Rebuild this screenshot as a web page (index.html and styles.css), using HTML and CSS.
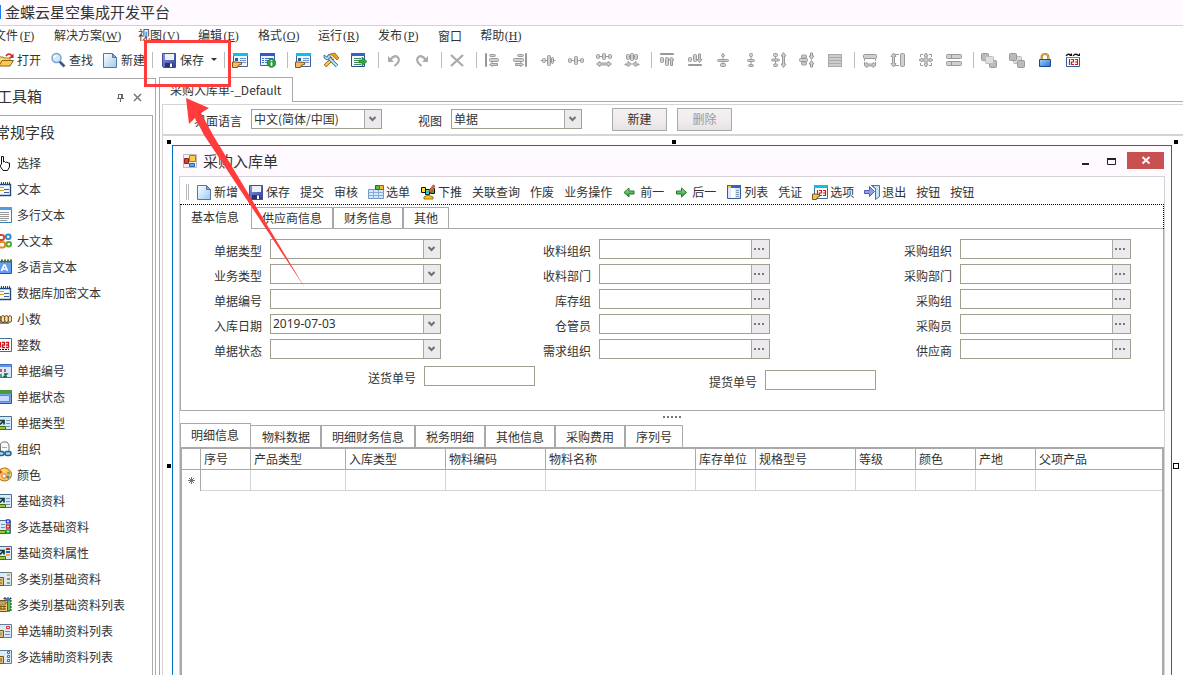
FILE: index.html
```html
<!DOCTYPE html>
<html lang="zh-CN">
<head>
<meta charset="utf-8">
<title>金蝶云星空集成开发平台</title>
<link rel="stylesheet" href="styles.css">
</head>
<body>
<svg class="defs" width="0" height="0" aria-hidden="true">
  <defs>
    <linearGradient id="g-blue" x1="0" y1="0" x2="1" y2="1"><stop offset="0" stop-color="#fff"/><stop offset="1" stop-color="#9cc9ee"/></linearGradient>
    <linearGradient id="g-save" x1="0" y1="0" x2="1" y2="1"><stop offset="0" stop-color="#8f97dc"/><stop offset="1" stop-color="#2c3f94"/></linearGradient>
    <linearGradient id="g-lock" x1="0" y1="0" x2="1" y2="1"><stop offset="0" stop-color="#9fd4ff"/><stop offset="1" stop-color="#2a6fd0"/></linearGradient>
    <linearGradient id="g-green" x1="0" y1="0" x2="0" y2="1"><stop offset="0" stop-color="#a5e8a0"/><stop offset="1" stop-color="#16912a"/></linearGradient>
  </defs>
  <symbol id="open" viewBox="0 0 16 16"><path d="M1 14V5h4l1 1h6v3" fill="#f7dc7a" stroke="#9b7325"/><path d="M1 14 4 8.500h11.500L12 14z" fill="#ffc94d" stroke="#8a6118"/><path d="M8 4q3-4 6 0" fill="none" stroke="#d42020" stroke-width="1.500"/><path d="M15.500 1.500V6H11z" fill="#d42020"/></symbol>
  <symbol id="find" viewBox="0 0 16 16"><path d="m9.500 9.500 5 5" stroke="#3a5a86" stroke-width="2.600"/><circle cx="6.500" cy="6" r="4.500" fill="#cdeafc" stroke="#7b9fc8" stroke-width="1.400"/><path d="M4 6q0-2.500 2.500-2.500" fill="none" stroke="#fff" stroke-width="1.500"/></symbol>
  <symbol id="new" viewBox="0 0 16 16"><path d="M1.500 1.500h9l4 4v10h-13z" fill="url(#g-blue)" stroke="#54779f"/><path d="M10.500 1.500v4h4z" fill="#7fa9d4" stroke="#54779f"/></symbol>
  <symbol id="save" viewBox="0 0 16 16"><path d="M1.500 1.500h13v14h-12l-1-1z" fill="url(#g-save)" stroke="#3e4a9a"/><path d="M4 2h9v6H4z" fill="#edf0fb"/><path d="M4 11h8v4H4z" fill="#26337c"/><path d="M9 11.500h2V15H9z" fill="#fff"/></symbol>
  <symbol id="formhand" viewBox="0 0 16 16"><path d="M1.500 1.500h14v13h-14z" fill="#edf4ff" stroke="#44618f"/><path d="M1 1h15v3H1z" fill="#08c4dc"/><path d="M8 6.500h6m-6 2h6m-6 2h6" stroke="#6f93d0"/><path d="M3 6h3v3H3z" fill="#265da8"/><path d="M.5 10h3l6 .5v2l-3 .5-1 2.500h-5z" fill="#f4bd60" stroke="#865514"/></symbol>
  <symbol id="forminfo" viewBox="0 0 16 16"><path d="M.5 1.500h14v12H.5z" fill="#edf2ff" stroke="#3d5eae"/><path d="M0 1h15v3H0z" fill="#3359c8"/><path d="M2 6.500h2m1 0h8m-11 2h2m1 0h5m-8 2h2m1 0h3" stroke="#4b71c4"/><circle cx="11.500" cy="11" r="4.300" fill="#25a33a" stroke="#116b1c" stroke-width=".6"/><path d="M11.500 8v1.200m0 1v3.500" stroke="#fff" stroke-width="1.700"/></symbol>
  <symbol id="tools" viewBox="0 0 16 16"><path d="m2 14 8-8" stroke="#90580b" stroke-width="3.500"/><path d="m2.500 13.500 8-8" stroke="#ffd152" stroke-width="2"/><path d="m7 2 5-1 4 5-2 2-4-4z" fill="#eaa21b" stroke="#8b5b12" stroke-width=".7"/><path d="m4 4 10 10" stroke="#34618c" stroke-width="3.400"/><path d="m4 4 10 10" stroke="#bde3f5" stroke-width="1.800"/><path d="M1 3v3l3 2 4-3-2-3-2 3z" fill="#acd8ef" stroke="#34618c" stroke-width=".8"/></symbol>
  <symbol id="formrun" viewBox="0 0 16 16"><path d="M.5 1.500h13v13H.5z" fill="#f6fbff" stroke="#29508d"/><path d="M0 1h14v3H0z" fill="#3561ce"/><path d="M3 6.500h7m-7 2h5m-5 2h6m-6 2h7" stroke="#46865e"/><path d="M8 8h3V5l5 4.500-5 4.500v-3H8z" fill="#29a73b" stroke="#237935" stroke-width=".6"/></symbol>
  <symbol id="undo" viewBox="0 0 16 16"><path d="M4 8q5-6 8-2.500T8.500 14" fill="none" stroke="#aaa" stroke-width="2.200"/><path d="M2 4v6h6z" fill="#aaa"/></symbol>
  <symbol id="redo" viewBox="0 0 16 16"><path d="M12 8Q7 2 4 5.500T7.500 14" fill="none" stroke="#aaa" stroke-width="2.200"/><path d="M14 4v6H8z" fill="#aaa"/></symbol>
  <symbol id="del" viewBox="0 0 16 16"><path d="m2 3 12 11M14 3 2 14" stroke="#aaa" stroke-width="2.300"/></symbol>
  <symbol id="a-left" viewBox="0 0 16 16"><g class="dim"><path d="M1.500 1.500v13h1v-13z"/><rect x="5.500" y="2.500" width="6" height="2" rx="1"/><rect x="5.500" y="6.500" width="9" height="3" rx="1"/><path d="m5.500 12.500 3-2v1h5v2h-5v1z"/></g></symbol>
  <symbol id="a-right" viewBox="0 0 16 16"><g class="dim"><path d="M13.500 1.500v13h1v-13z"/><rect x="5.500" y="2.500" width="6" height="2" rx="1"/><rect x="1.500" y="6.500" width="10" height="3" rx="1"/><path d="m11.500 12.500-3-2v1h-5v2h5v1z"/></g></symbol>
  <symbol id="a-h1" viewBox="0 0 16 16"><g class="dim"><path d="M.5 8.500h15"/><rect x="2.500" y="6.500" width="3" height="4" rx="1"/><rect x="7.500" y="3.500" width="3" height="10" rx="1"/><rect x="11.500" y="5.500" width="2" height="6" rx="1"/></g></symbol>
  <symbol id="a-h2" viewBox="0 0 16 16"><g class="dim"><path d="M0 8.500h16"/><rect x=".5" y="6.500" width="3" height="4" rx="1"/><rect x="6.500" y="4.500" width="3" height="8" rx="1"/><rect x="12.500" y="6.500" width="3" height="4" rx="1"/></g></symbol>
  <symbol id="a-h3" viewBox="0 0 16 16"><g class="dim"><path d="M1 4.500h14"/><rect x=".5" y="2.500" width="3" height="4" rx="1"/><rect x="6.500" y="1.500" width="3" height="6" rx="1"/><rect x="12.500" y="2.500" width="3" height="4" rx="1"/><path d="m.5 12 3.500-2.500V11h8V9.500l3.500 2.500-3.500 2.500V13H4v1.500z"/></g></symbol>
  <symbol id="a-h4" viewBox="0 0 16 16"><g class="dim"><rect x="2.500" y="2.500" width="3" height="5" rx="1"/><rect x="6.500" y="1.500" width="3" height="7" rx="1"/><rect x="10.500" y="2.500" width="3" height="5" rx="1"/><path d="M1 12h3V9.500L7.500 12 4 14.500V13H1zm14 0h-3V9.500L8.500 12l3.500 2.500V13h3z"/></g></symbol>
  <symbol id="a-top" viewBox="0 0 16 16"><g class="dim"><path d="M1.500 1.500h13v1h-13z"/><rect x="1.500" y="5.500" width="3" height="5" rx="1"/><rect x="6.500" y="5.500" width="3" height="8" rx="1"/><path d="M12.500 5 15 8h-1.500v5.500h-2V8H10z"/></g></symbol>
  <symbol id="a-bot" viewBox="0 0 16 16"><g class="dim"><path d="M1.500 12.500h13v1h-13z"/><rect x="1.500" y="5.500" width="3" height="4" rx="1"/><rect x="6.500" y="2.500" width="3" height="7" rx="1"/><path d="M12.500 10.500 15 7.500h-1.500V2h-2v5.500H10z"/></g></symbol>
  <symbol id="a-v1" viewBox="0 0 16 16"><g class="dim"><path d="M8 1v14"/><rect x="6.500" y="2.500" width="3" height="2" rx="1"/><rect x="2.500" y="7.500" width="11" height="2" rx="1"/><rect x="5.500" y="11.500" width="5" height="3" rx="1"/></g></symbol>
  <symbol id="a-v2" viewBox="0 0 16 16"><g class="dim"><path d="M8 1v14"/><rect x="6.500" y="1.500" width="3" height="3" rx="1"/><rect x="4.500" y="7.500" width="7" height="2" rx="1"/><rect x="5.500" y="12.500" width="5" height="2" rx="1"/></g></symbol>
  <symbol id="a-v3" viewBox="0 0 16 16"><g class="dim"><path d="M4.500 1v14"/><rect x="2.500" y="1.500" width="4" height="3" rx="1"/><rect x=".5" y="7" width="8" height="2" rx="1"/><rect x="2.500" y="12" width="4" height="2.500" rx="1"/><path d="M12.500.5 15 4h-1.500v8H15l-2.500 3.500L10 12h1.500V4H10z"/></g></symbol>
  <symbol id="a-v4" viewBox="0 0 16 16"><g class="dim"><rect x="2.500" y="3" width="5" height="3" rx="1"/><rect x=".5" y="6.500" width="8" height="3" rx="1"/><rect x="2.500" y="10" width="5" height="3" rx="1"/><path d="M11.500 1v3H10l2.500 3.500L15 4h-1.500V1zm0 14v-3H10l2.500-3.500L15 12h-1.500v3z"/></g></symbol>
  <symbol id="a-list" viewBox="0 0 16 16"><path d="M1 2h14v13H1z" fill="#aaa"/><path d="M2 3h12v2H2zm0 3h12v2H2zm0 3h12v2H2zm0 3h12v2H2z" fill="#ccc"/></symbol>
  <symbol id="s-w" viewBox="0 0 16 16"><g class="dim"><rect x="1.500" y="2.500" width="13" height="4" rx="1"/><path d="M2.500 7v5m11-5v5" stroke-dasharray="2 1"/><path d="m2 13 3-2.500V12h6v-1.500l3 2.500-3 2.500V14H5v1.500z"/></g></symbol>
  <symbol id="s-h" viewBox="0 0 16 16"><g class="dim"><rect x="10.500" y="1.500" width="4" height="13" rx="1"/><path d="M5 2.500h4m-4 11h4"/><path d="M3.500 1 6 4.500H4.500v7H6l-2.500 3.500L1 11.500h1.500v-7H1z"/></g></symbol>
  <symbol id="s-both" viewBox="0 0 16 16"><g class="dim"><path fill="none" d="M2.500 5V2.500H5m6 0h2.500V5m0 6v2.500H11m-6 0H2.500V11"/><path d="m8 1 2 3H9v3h3V6l3 2-3 2V9H9v3h1l-2 3-2-3h1V9H4v1L1 8l3-2v1h3V4H6z"/></g></symbol>
  <symbol id="s-rows" viewBox="0 0 16 16"><g class="dim"><rect x=".5" y="2.500" width="15" height="4" rx="1"/><path d="M5.500 2v5"/><rect x=".5" y="9.500" width="15" height="4" rx="1"/><path d="M5.500 9.500v4"/></g></symbol>
  <symbol id="z-front" viewBox="0 0 16 16"><g class="dim"><rect x=".5" y="1.500" width="7" height="7" rx="1" fill="#bbb"/><rect x="8.500" y="8.500" width="7" height="7" rx="1" fill="#bbb"/><rect x="4.500" y="4.500" width="8" height="7" rx="1" fill="#ddd" stroke="#bbb"/></g></symbol>
  <symbol id="z-back" viewBox="0 0 16 16"><g class="dim"><rect x="4.500" y="4.500" width="8" height="7" rx="1" fill="#ddd" stroke="#bbb"/><rect x=".5" y="1.500" width="7" height="7" rx="1" fill="#bbb"/><rect x="8.500" y="8.500" width="7" height="7" rx="1" fill="#bbb"/></g></symbol>
  <symbol id="lock" viewBox="0 0 16 16"><path d="M4.700 8V5a3.300 3 0 0 1 6.600 0v3" fill="none" stroke="#a77521" stroke-width="2.200"/><path d="M4.700 8V5a3.300 3 0 0 1 6.600 0v3" fill="none" stroke="#f3c864" stroke-width=".8"/><path d="M2.500 7.500h11v7h-11z" fill="url(#g-lock)" stroke="#194b8e"/></symbol>
  <symbol id="num" viewBox="0 0 16 16"><path d="M1 4q2-3 5-1m2 1q2-3 5-1" fill="none" stroke="#111" stroke-width="1.300"/><path d="M7 1v3H4zm8 0v3h-3z" fill="#111"/><path d="M1.500 5.500h13v9h-13z" fill="#fff" stroke="#355a96"/><path d="M1 5h14v1H1z" fill="#5c81c2"/><path d="M4.500 7v6M6 7.500h2.500V10H6.500v2.500H9M10 7.500h2.500v5H10m0-2.500h2" fill="none" stroke="#d01818" stroke-width="1.200"/></symbol>
  <symbol id="grid" viewBox="0 0 16 16"><path d="M.5 5.500h15v9H.5z" fill="#d3e7ff" stroke="#7398c8"/><path d="M.5 8.500h15m-15 3h15m-10-6v9m5-9v9" stroke="#88add9"/><path d="M7.500 1.500h4v4h-4z" fill="#57bd40" stroke="#236d20"/><path d="M11.500 1.500h4v4h-4z" fill="#ffb834" stroke="#956319"/></symbol>
  <symbol id="push" viewBox="0 0 16 16"><path d="M1.500 3.500h4v5h-4zm4 2h4v5h-4zm5-1h4v5h-4z" fill="#ffe529" stroke="#111"/><path d="M6 6.500h3v3H6z" fill="#17c8e5"/><path d="M11 6h3v3h-3z" fill="#29b83b"/><path d="m9 7 4-6 2 1-4 7z" fill="#db6844" stroke="#8a4421" stroke-width=".6"/><path d="m4 13 4-2 5 2v2H4z" fill="#ffc90b" stroke="#947218"/></symbol>
  <symbol id="prev" viewBox="0 0 16 16"><path d="m2 8.500 5-4.500v3h5v3H7v3z" fill="url(#g-green)" stroke="#24772a"/></symbol>
  <symbol id="next" viewBox="0 0 16 16"><path d="m12.500 8.500-5-4.500v3h-5v3h5v3z" fill="url(#g-green)" stroke="#24772a"/></symbol>
  <symbol id="list" viewBox="0 0 16 16"><path d="M1.500 1.500h13v13h-13z" fill="#d9e8fb" stroke="#345b98"/><path d="M1 1h14v3H1z" fill="#3268b2"/><path d="M2 2h3v2H2z" fill="#ffc23c"/><path d="M5 4h4v10H5z" fill="#fff"/><path d="M10 6.500h3m-3 2h3m-3 2h3m-3 2h3" stroke="#8298b5"/></symbol>
  <symbol id="opt" viewBox="0 0 16 16"><path d="M2.500 1.500h13v13h-13z" fill="#fff" stroke="#416898"/><path d="M2 1h14v3H2z" fill="#08c4dc"/><path d="M5.500 6v6M7 6.500h2.500V9H7.500v2.500H10M11 6.500h2.500v5H11M11 9h2" fill="none" stroke="#d01818" stroke-width="1.200"/><path d="M.5 10h3l4 .5v2l-2 .5-1 2.500h-4z" fill="#f4bd60" stroke="#865514"/></symbol>
  <symbol id="exit" viewBox="0 0 16 16"><path d="M7.500 1.500h8v11l-4 3V4.500z" fill="#c7e2f4" stroke="#45769e"/><path d="m7.500 1.500 4 3v11" fill="none" stroke="#45769e"/><path d="M.5 6.500h5v-4l5 5-5 5v-3h-5z" fill="#8e9eea" stroke="#505db8"/></symbol>
  <symbol id="winform" viewBox="0 0 16 16"><path d="M1.500 1.500h13v13h-13z" fill="#f2f2f2" stroke="#bbb"/><path d="M7.500 2.500h6v6h-6z" fill="#ffcd45" stroke="#a97a0a"/><path d="M2.500 5.500h4v5h-4z" fill="#e04030" stroke="#8e2015"/><path d="M7.500 10.500h5v3h-5z" fill="#63a5f4" stroke="#2866b5"/></symbol>
  <symbol id="hand" viewBox="0 0 16 16"><path d="M5.500 9V1.500h2V7l1-.5 1 1 1.500-.5 1 1 1.500 0v4l-2 3.500H7L4 11z" fill="#fff" stroke="#111"/></symbol>
  <symbol id="text" viewBox="0 0 16 16"><path d="M1.500 3.500h13v11h-13z" fill="#f2f8ff" stroke="#254a78" stroke-width="1.400"/><path d="M1 2.500h14" stroke="#254a78" stroke-width="3" stroke-dasharray="1 1"/><path d="M3 6.500h5m-5 3h5" stroke="#d2a315"/><path d="M8 8.500h5m-5 3h5" stroke="#3c5e92"/></symbol>
  <symbol id="multi" viewBox="0 0 16 16"><path d="M1.500.5h14v15h-14z" fill="#f8fbff" stroke="#397fba"/><path d="M1 0h15v3H1z" fill="#4f9ddd"/><path d="M4 5.500h9m-9 2h9m-9 2h9m-9 2h9m-9 2h7" stroke="#999"/></symbol>
  <symbol id="big" viewBox="0 0 16 16"><g fill="none" stroke-width="2"><rect x="2" y="2" width="6" height="5" rx="2" stroke="#d84825"/><rect x="10" y="1.500" width="4.500" height="4.500" rx="2" stroke="#3189cc"/><rect x="3" y="9" width="6" height="5.500" rx="2" stroke="#e88b24"/><rect x="10.500" y="9" width="4.500" height="4.500" rx="2" stroke="#58a73c"/></g></symbol>
  <symbol id="lang" viewBox="0 0 16 16"><path d="M1.500 2.500h14v12h-14z" fill="#629cf5" stroke="#225599"/><path d="M2 2h14" stroke="#3a7137" stroke-width="3" stroke-dasharray="2 1"/><path d="m5.500 12 2.500-6h1l2.500 6M6.500 10h4" fill="none" stroke="#fff" stroke-width="1.700"/></symbol>
  <symbol id="dec" viewBox="0 0 16 16"><g fill="#ffe49b" stroke="#654b28"><ellipse cx="3" cy="8" rx="2" ry="3.500"/><ellipse cx="7" cy="8" rx="2" ry="3.500"/><ellipse cx="10.500" cy="8" rx="2" ry="3.500"/><ellipse cx="14" cy="8" rx="1.800" ry="3.500"/></g><path d="M4 12h9" stroke="#111"/></symbol>
  <symbol id="int" viewBox="0 0 16 16"><path d="M.5 1.500h15v13H.5z" fill="#fff" stroke="#446d94"/><path d="M4.500 5v5.500M6 5.500h2.500V8H6.500v2.500H9M10 5.500h2.500v5H10M10 8h2" fill="none" stroke="#ca1919" stroke-width="1.300"/><path d="M3 12.500h10" stroke="#111" stroke-dasharray="2 1"/></symbol>
  <symbol id="code" viewBox="0 0 16 16"><path d="M.5 1.500h15v13H.5z" fill="#d7e8ff" stroke="#426fbf"/><path d="M1 2h14v2H1z" fill="#5e93ec"/><path d="M5 6v3m4-3v3" stroke="#d02424" stroke-width="1.500"/><path d="M5 11v3m3-3h3l-3 2.500h3" fill="none" stroke="#176b31" stroke-width="1.300"/></symbol>
  <symbol id="state" viewBox="0 0 16 16"><path d="M.5 1.500h15v13H.5z" fill="#79a7f4" stroke="#285692"/><path d="M0 1h16v4H0z" fill="#4a9839"/><rect x="3.500" y="6.500" width="10" height="6" fill="#c8dcff" stroke="#254f91" stroke-dasharray="1 1"/></symbol>
  <symbol id="base" viewBox="0 0 16 16"><path d="M.5 1.500h15v13H.5z" fill="#d5eafa" stroke="#48708d"/><path d="M10 5.500h4m-4 3h4m-4 3h4" stroke="#7692b4"/><path d="m4 9.500 4-4m-4 0h4v4" fill="none" stroke="#163b38" stroke-width="1.700"/><path d="M0 11.500h9.500v3H0z" fill="#99cc2f" stroke="#476b19"/></symbol>
  <symbol id="org" viewBox="0 0 16 16"><path d="M4.500 10V2.500l2-1.500H11l2 3v7" fill="#fafafa" stroke="#777"/><path d="M6 6.500h5" stroke="#aaa"/><rect x="2" y="10.500" width="6" height="4" rx="2" fill="#a9d7f5" stroke="#1b6192" stroke-width="1.500"/><rect x="9" y="10.500" width="6" height="4" rx="2" fill="#a9d7f5" stroke="#1b6192" stroke-width="1.500"/></symbol>
  <symbol id="color" viewBox="0 0 16 16"><ellipse cx="8.500" cy="7.500" rx="7" ry="6.500" fill="#ffc46c" stroke="#b56a19"/><circle cx="8" cy="3.500" r="1.700" fill="#f6ef35"/><circle cx="4.500" cy="5" r="1.500" fill="#e33c24"/><circle cx="12.500" cy="6" r="1.500" fill="#62b542"/><circle cx="12" cy="10" r="1.500" fill="#347fd0"/><circle cx="8" cy="9" r="2.200" fill="#fff" stroke="#c77522"/></symbol>
  <symbol id="base-multi" viewBox="0 0 16 16"><path d="M.5 1.500h14v13H.5z" fill="#d5eafa" stroke="#48708d"/><path d="M5 5.500h4m-4 3h4" stroke="#7692b4"/><path d="M0 11.500h9.500v3H0z" fill="#99cc2f" stroke="#476b19"/><g fill="#fff" stroke-width="1.300"><path stroke="#2242de" d="M10.500.8h3v3h-3z"/><path stroke="#d32525" d="M10.500 6h3v3h-3z"/><path stroke="#24a33a" d="M10.500 11h3v3h-3z"/></g></symbol>
  <symbol id="base-prop" viewBox="0 0 16 16"><path d="M.5 1.500h15v13H.5z" fill="#d5eafa" stroke="#48708d"/><path d="m4 9.500 4-4m-4 0h4v4" fill="none" stroke="#163b38" stroke-width="1.700"/><path d="M0 11.500h9.500v3H0z" fill="#99cc2f" stroke="#476b19"/><path d="M10 3h4v2h-4z" fill="#d42020"/><path d="M10 6h4v2h-4z" fill="#2464d8"/><path d="M10 9h4v2h-4z" fill="#f1b51c"/></symbol>
  <symbol id="cat" viewBox="0 0 16 16"><path d="M.5 1.500h15v13H.5z" fill="#d9ebfb" stroke="#607e9c"/><path d="M1.500 6.500h6v8h-6z" fill="#e5c277" stroke="#77561e"/><path d="M3 9h3m-3 3h3" stroke="#77561e"/><path d="M11 3h3v2h-3z" fill="#eab322"/><path d="M11 7h3v2h-3z" fill="#d57923"/><path d="M11 11h3v2h-3z" fill="#73b765"/></symbol>
  <symbol id="cat-list" viewBox="0 0 16 16"><path d="M8 1h7v13H8z" fill="#66bd58" stroke="#222" stroke-dasharray="2 1"/><path d="M10 1h4v3h-4z" fill="#3c76db"/><path d="M1.500 3.500h10v11h-10z" fill="#efca79" stroke="#77561e"/><path d="M3 5h7v2H3zm0 4.500h7M3 12h7M5 8v5m3-5v5" stroke="#77561e" fill="#fff2c7"/></symbol>
  <symbol id="aux" viewBox="0 0 16 16"><path d="M.5 1.500h15v13H.5z" fill="#d9ebfb" stroke="#607e9c"/><path d="M1.500 7.500h6v7h-6z" fill="#e5c277" stroke="#77561e"/><path d="M3 10h3m-3 2h3m3-3.500h5m-5 3h5" stroke="#7790ad"/><path d="M10.500 3.500h3v2h-3z" fill="#fff" stroke="#d03028"/></symbol>
  <symbol id="aux-multi" viewBox="0 0 16 16"><path d="M.5 1.500h15v13H.5z" fill="#d9ebfb" stroke="#607e9c"/><path d="M1.500 7.500h6v7h-6z" fill="#e5c277" stroke="#77561e"/><path d="M3 10h3m-3 2h3" stroke="#77561e"/><path d="M11.500 2.500h2v2h-2zm0 4h2v2h-2zm0 4h2v2h-2z" fill="#fff" stroke="#666"/></symbol>
</svg>

<div class="app">
  <header class="titlebar"><span class="brand"></span><h1>金蝶云星空集成开发平台</h1></header>
  <nav class="menubar">
    <button>文件<span>(<u>F</u>)</span></button><button>解决方案<span>(<u>W</u>)</span></button><button>视图<span>(<u>V</u>)</span></button><button>编辑<span>(<u>E</u>)</span></button><button>格式<span>(<u>O</u>)</span></button><button>运行<span>(<u>R</u>)</span></button><button>发布<span>(<u>P</u>)</span></button><button>窗口</button><button>帮助<span>(<u>H</u>)</span></button>
  </nav>
  <div class="toolbar">
    <div class="main-tools">
      <button><svg><use href="#open"/></svg>打开</button>
      <button><svg><use href="#find"/></svg>查找</button>
      <button><svg><use href="#new"/></svg>新建</button>
    </div>
    <i class="sep wide"></i>
    <button class="save"><svg><use href="#save"/></svg>保存<i class="caret"></i></button>
    <i class="sep"></i>
    <button class="tool" aria-label="表单"><svg><use href="#formhand"/></svg></button><button class="tool" aria-label="信息"><svg><use href="#forminfo"/></svg></button>
    <i class="sep"></i>
    <button class="tool" aria-label="属性"><svg><use href="#formhand"/></svg></button><button class="tool" aria-label="工具"><svg><use href="#tools"/></svg></button><button class="tool" aria-label="运行"><svg><use href="#formrun"/></svg></button>
    <i class="sep"></i>
    <button class="tool" aria-label="撤销"><svg><use href="#undo"/></svg></button><button class="tool" aria-label="重做"><svg><use href="#redo"/></svg></button>
    <i class="sep"></i>
    <button class="tool" aria-label="删除"><svg><use href="#del"/></svg></button>
    <i class="sep"></i>
    <button class="tool" aria-label="左对齐"><svg><use href="#a-left"/></svg></button><button class="tool" aria-label="右对齐"><svg><use href="#a-right"/></svg></button><button class="tool" aria-label="水平靠拢"><svg><use href="#a-h1"/></svg></button><button class="tool" aria-label="水平等距"><svg><use href="#a-h2"/></svg></button><button class="tool" aria-label="增加水平间距"><svg><use href="#a-h3"/></svg></button><button class="tool" aria-label="减少水平间距"><svg><use href="#a-h4"/></svg></button>
    <i class="sep"></i>
    <button class="tool" aria-label="顶对齐"><svg><use href="#a-top"/></svg></button><button class="tool" aria-label="底对齐"><svg><use href="#a-bot"/></svg></button><button class="tool" aria-label="垂直靠拢"><svg><use href="#a-v1"/></svg></button><button class="tool" aria-label="垂直等距"><svg><use href="#a-v2"/></svg></button><button class="tool" aria-label="增加垂直间距"><svg><use href="#a-v3"/></svg></button><button class="tool" aria-label="减少垂直间距"><svg><use href="#a-v4"/></svg></button><button class="tool" aria-label="行高"><svg><use href="#a-list"/></svg></button>
    <i class="sep"></i>
    <button class="tool" aria-label="同宽"><svg><use href="#s-w"/></svg></button><button class="tool" aria-label="同高"><svg><use href="#s-h"/></svg></button><button class="tool" aria-label="同大小"><svg><use href="#s-both"/></svg></button><button class="tool" aria-label="标签同宽"><svg><use href="#s-rows"/></svg></button>
    <i class="sep"></i>
    <button class="tool" aria-label="置前"><svg><use href="#z-front"/></svg></button><button class="tool" aria-label="置后"><svg><use href="#z-back"/></svg></button><button class="tool" aria-label="锁定"><svg><use href="#lock"/></svg></button><button class="tool" aria-label="顺序"><svg><use href="#num"/></svg></button>
  </div>

  <div class="workspace">
    <aside class="toolbox">
      <div class="toolbox-head"><h2>工具箱</h2>
        <button aria-label="固定"><svg class="mini" viewBox="0 0 9 9"><path d="M2.500 1v4m4-4v4M2 1.500h5M1 5.500h7M4.500 5v4" fill="none" stroke="#666"/><path d="M5 1h2v4H5z" fill="#666"/></svg></button>
        <button aria-label="关闭"><svg class="mini" viewBox="0 0 9 9"><path d="m1 1 7 7m0-7L1 8" stroke="#777" stroke-width="1.500"/></svg></button>
      </div>
      <div class="toolbox-body">
        <h3>常规字段</h3>
        <ul>
          <li><svg><use href="#hand"/></svg>选择</li>
          <li><svg><use href="#text"/></svg>文本</li>
          <li><svg><use href="#multi"/></svg>多行文本</li>
          <li><svg><use href="#big"/></svg>大文本</li>
          <li><svg><use href="#lang"/></svg>多语言文本</li>
          <li><svg><use href="#text"/></svg>数据库加密文本</li>
          <li><svg><use href="#dec"/></svg>小数</li>
          <li><svg><use href="#int"/></svg>整数</li>
          <li><svg><use href="#code"/></svg>单据编号</li>
          <li><svg><use href="#state"/></svg>单据状态</li>
          <li><svg><use href="#base"/></svg>单据类型</li>
          <li><svg><use href="#org"/></svg>组织</li>
          <li><svg><use href="#color"/></svg>颜色</li>
          <li><svg><use href="#base"/></svg>基础资料</li>
          <li><svg><use href="#base-multi"/></svg>多选基础资料</li>
          <li><svg><use href="#base-prop"/></svg>基础资料属性</li>
          <li><svg><use href="#cat"/></svg>多类别基础资料</li>
          <li><svg><use href="#cat-list"/></svg>多类别基础资料列表</li>
          <li><svg><use href="#aux"/></svg>单选辅助资料列表</li>
          <li><svg><use href="#aux-multi"/></svg>多选辅助资料列表</li>
        </ul>
      </div>
    </aside>

    <main class="document">
      <div class="doc-tabs"><button>采购入库单-_Default</button></div>
      <div class="doc-body"><div class="doc-inner">
        <div class="viewbar">
          <label for="lang-sel">界面语言</label><select id="lang-sel"><option>中文(简体/中国)</option></select>
          <label for="view-sel">视图</label><select id="view-sel"><option>单据</option></select>
          <button>新建</button><button disabled>删除</button>
        </div>
        <div class="canvas">
          <section class="window">
            <i class="handle nw"></i><i class="handle n"></i><i class="handle ne"></i><i class="handle w"></i><i class="handle e"></i>
            <div class="win-title"><svg><use href="#winform"/></svg><h2>采购入库单</h2>
              <button class="ctl" aria-label="最小化"><svg viewBox="0 0 16 16"><path d="M5 10h7v2H5z" fill="#222"/></svg></button>
              <button class="ctl" aria-label="最大化"><svg viewBox="0 0 16 16"><path d="M4.500 5.500h8v6h-8z" fill="none" stroke="#222"/><path d="M4 5h9v2H4z" fill="#222"/></svg></button>
              <button class="close" aria-label="关闭窗口"><svg viewBox="0 0 16 16"><path d="m4.500 5 7 6.500m0-6.500-7 6.500" stroke="#fff" stroke-width="1.800"/></svg></button>
            </div>
            <div class="client">
              <div class="form-tools"><i class="grip"></i>
                <button><svg><use href="#new"/></svg>新增</button><button><svg><use href="#save"/></svg>保存</button><button>提交</button><button>审核</button><button><svg><use href="#grid"/></svg>选单</button><button><svg><use href="#push"/></svg>下推</button><button>关联查询</button><button>作废</button><button>业务操作</button><button><svg><use href="#prev"/></svg>前一</button><button><svg><use href="#next"/></svg>后一</button><button><svg><use href="#list"/></svg>列表</button><button>凭证</button><button><svg><use href="#opt"/></svg>选项</button><button><svg><use href="#exit"/></svg>退出</button><button>按钮</button><button>按钮</button>
              </div>
              <div class="tabs head-tabs"><button class="on">基本信息</button><button>供应商信息</button><button>财务信息</button><button>其他</button><span class="tab-fill"></span></div>
              <div class="panel">
                <div class="fields">
                  <div class="col">
                    <div class="field"><label for="f1">单据类型</label><select id="f1"><option></option></select></div>
                    <div class="field"><label for="f2">业务类型</label><select id="f2"><option></option></select></div>
                    <div class="field"><label for="f3">单据编号</label><input id="f3"></div>
                    <div class="field"><label for="f4">入库日期</label><select id="f4" class="date"><option>2019-07-03</option></select></div>
                    <div class="field"><label for="f5">单据状态</label><select id="f5"><option></option></select></div>
                  </div>
                  <div class="col">
                    <div class="field"><label for="g1">收料组织</label><span class="lookup"><input id="g1"><button aria-label="选择收料组织"></button></span></div>
                    <div class="field"><label for="g2">收料部门</label><span class="lookup"><input id="g2"><button aria-label="选择收料部门"></button></span></div>
                    <div class="field"><label for="g3">库存组</label><span class="lookup"><input id="g3"><button aria-label="选择库存组"></button></span></div>
                    <div class="field"><label for="g4">仓管员</label><span class="lookup"><input id="g4"><button aria-label="选择仓管员"></button></span></div>
                    <div class="field"><label for="g5">需求组织</label><span class="lookup"><input id="g5"><button aria-label="选择需求组织"></button></span></div>
                  </div>
                  <div class="col">
                    <div class="field"><label for="h1">采购组织</label><span class="lookup"><input id="h1"><button aria-label="选择采购组织"></button></span></div>
                    <div class="field"><label for="h2">采购部门</label><span class="lookup"><input id="h2"><button aria-label="选择采购部门"></button></span></div>
                    <div class="field"><label for="h3">采购组</label><span class="lookup"><input id="h3"><button aria-label="选择采购组"></button></span></div>
                    <div class="field"><label for="h4">采购员</label><span class="lookup"><input id="h4"><button aria-label="选择采购员"></button></span></div>
                    <div class="field"><label for="h5">供应商</label><span class="lookup"><input id="h5"><button aria-label="选择供应商"></button></span></div>
                  </div>
                </div>
                <div class="extra">
                  <div class="field"><label for="e1">送货单号</label><input id="e1"></div>
                  <div class="field low"><label for="e2">提货单号</label><input id="e2"></div>
                </div>
              </div>
              <div class="splitter"><i></i><i></i><i></i><i></i><i></i></div>
              <div class="tabs detail-tabs"><button class="on">明细信息</button><button>物料数据</button><button>明细财务信息</button><button>税务明细</button><button>其他信息</button><button>采购费用</button><button>序列号</button></div>
              <div class="grid-frame">
                <table>
                  <colgroup><col class="c19"><col class="c50"><col class="c95"><col class="c100"><col class="c100"><col class="c150"><col class="c60"><col class="c100"><col class="c60"><col class="c60"><col class="c60"><col></colgroup>
                  <thead><tr><th></th><th>序号</th><th>产品类型</th><th>入库类型</th><th>物料编码</th><th>物料名称</th><th>库存单位</th><th>规格型号</th><th>等级</th><th>颜色</th><th>产地</th><th>父项产品</th></tr></thead>
                  <tbody><tr><td class="mark"><svg viewBox="0 0 9 9" aria-hidden="true"><path d="M4.500 1v7M1 4.500h7M2 2l5 5m0-5L2 7" stroke="#666" stroke-width=".9"/></svg></td><td></td><td></td><td></td><td></td><td></td><td></td><td></td><td></td><td></td><td></td><td></td></tr></tbody>
                </table>
              </div>
            </div>
          </section>
        </div>
      </div></div>
    </main>
  </div>
</div>
<div class="callout"></div>
<svg class="arrow" viewBox="0 0 130 200" aria-hidden="true"><path d="M6 1 29 11 21 16 33 38 125 191 24 38 15 21 9 27z" fill="#ff3b3b"/></svg>
</body>
</html>
```
FILE: styles.css
```css
* { box-sizing: border-box; }
body {
  margin: 0;
  background: #fff;
  color: #333;
  font: 12px/16px "Noto Sans CJK SC", "Noto Sans", sans-serif;
}
button, input, select { font: inherit; color: inherit; margin: 0; padding: 0; border: 0; border-radius: 0; background: none; outline: 0; }
button { white-space: nowrap; }
h1, h2, h3 { margin: 0; font-size: 15px; line-height: 20px; font-weight: 400; white-space: nowrap; }
ul { margin: 0; padding: 0; list-style: none; }
svg { display: block; flex: none; width: 16px; height: 16px; }
.defs { position: absolute; width: 0; height: 0; }
.dim { fill: #d0d0d0; stroke: #999; }

.app { display: flex; flex-direction: column; height: 100vh; overflow: hidden; }
.titlebar { display: flex; align-items: center; gap: 4px; flex: none; height: 26px; padding-bottom: 2px; background: #fefaff; border-bottom: 1px solid #d2d2d4; }
.brand { width: 1px; height: 14px; background: #1e7ff0; }
.menubar { display: flex; flex: none; gap: 18px; height: 19px; margin-left: -6px; align-items: center; }
.menubar span { display: inline-block; width: 18px; font: 12px/16px "Liberation Serif", serif; text-align: center; }
.toolbar { display: flex; flex: none; align-items: center; height: 29px; margin-bottom: 2px; }
.main-tools { display: flex; gap: 9px; margin-left: -2px; }
.main-tools button, .save { display: flex; align-items: center; gap: 3px; }
.save { padding-right: 2px; }
.caret { margin-left: 4px; border: 3px solid transparent; border-top-color: #333; border-bottom: 0; }
.sep { flex: none; width: 1px; height: 16px; margin: 0 1px 0 5px; background: #bbb; }
.sep.wide { margin: 0 8px 0 7px; }
.tool { display: flex; flex: none; justify-content: center; width: 28px; }

.workspace { display: flex; flex: 1; min-height: 0; gap: 3px; }
.toolbox { display: flex; flex-direction: column; flex: none; width: 156px; margin-top: 2px; border: solid #a9a9a9; border-width: 1px 1px 0 0; overflow: hidden; }
.toolbox-head { display: flex; align-items: center; flex: none; height: 36px; margin-left: -3px; padding-right: 13px; gap: 8px; }
.toolbox-head h2 { flex: 1; padding-bottom: 2px; }
.mini { width: 9px; height: 9px; }
.toolbox-body { flex: 1; min-height: 0; margin-right: 2px; border: solid #a9a9a9; border-width: 1px 1px 0 0; }
.toolbox-body h3 { margin-left: -5px; padding: 6px 0 8px; }
.toolbox li { display: flex; align-items: center; gap: 5px; height: 26px; margin-left: -4px; white-space: nowrap; }

.document { display: flex; flex: 1; flex-direction: column; min-width: 0; padding-top: 1px; }
.doc-tabs { flex: none; height: 25px; border-bottom: 1px solid #a9a9a9; }
.doc-tabs button { height: 25px; padding: 0 11px 0 10px; background: #fff; border: solid #a9a9a9; border-width: 1px 1px 0; }
.doc-body { display: flex; flex: 1; min-height: 0; padding: 2px 0 0 2px; border-left: 1px solid #a9a9a9; }
.doc-inner { display: flex; flex: 1; flex-direction: column; min-width: 0; border: solid #d4d4d4; border-width: 1px 0 0 1px; }
.viewbar { display: flex; align-items: center; flex: none; height: 31px; padding: 0 0 1px 31px; border-bottom: 2px solid #d4d4d4; }
.viewbar label { padding-top: 4px; margin-right: 9px; }
.viewbar select { width: 131px; margin-right: 36px; }
.viewbar select + button { margin-left: -6px; }
.viewbar button { width: 55px; height: 23px; margin-right: 10px; background: linear-gradient(#f2f2f2, #f0eaee 60%, #e3e3e3); border: 1px solid #a9a9a9; }
.viewbar button:disabled { color: #999; }
select {
  appearance: none;
  height: 20px;
  padding: 0 20px 0 2px;
  border: 1px solid #a0a090;
  background: #fff url("data:image/svg+xml,%3Csvg xmlns='http://www.w3.org/2000/svg' width='17' height='18'%3E%3Cpath d='M0 0h17v18H0z' fill='%23eceaec'/%3E%3Cpath d='M0 0h1v18H0z' fill='%23a9a9a9'/%3E%3Cpath d='M5.500 7l3 3 3-3' fill='none' stroke='%23707070' stroke-width='2'/%3E%3C/svg%3E") right center no-repeat;
}
input { height: 20px; padding: 0 2px; border: 1px solid #a0a090; background: #fff; }
.date { font-family: "Noto Sans", sans-serif; }

.canvas { display: flex; flex: 1; min-height: 0; padding: 9px 11px 0 9px; }
.window { position: relative; display: flex; flex: 1; flex-direction: column; min-width: 0; padding: 0 6px; background: #fefaff; border: 1px solid #0072c6; border-bottom: 0; }
.handle { position: absolute; width: 4px; height: 4px; background: #000; }
.nw { left: -6px; top: -6px; }
.n { left: 50%; top: -6px; }
.ne { right: -7px; top: -6px; }
.w { left: -6px; top: 318px; }
.e { right: -8px; top: 317px; width: 6px; height: 6px; background: #fff; border: 1px solid #000; }
.win-title { display: flex; align-items: center; flex: none; height: 30px; padding: 0 1px 1px 3px; gap: 5px; }
.win-title h2 { flex: 1; }
.win-title .ctl { margin-right: 5px; }
.win-title .ctl + .close { margin-left: -2px; }
.close { display: flex; justify-content: center; width: 37px; height: 17px; margin-bottom: 1px; background: #c75050; }
.client { display: flex; flex: 1; flex-direction: column; min-height: 0; background: #fff; border: solid #d4d2d6; border-width: 1px 1px 0; }
.form-tools { display: flex; align-items: center; flex: none; height: 27px; gap: 10px; padding: 2px 0 0 6px; }
.form-tools button { display: flex; align-items: center; gap: 2px; }
.grip { width: 3px; height: 16px; margin-right: -3px; border: solid #bbb; border-width: 0 1px; }

.tabs { display: flex; flex: none; align-items: flex-end; }
.tabs button { height: 22px; padding: 0 10px; border: 1px solid #a9a9a9; border-bottom: 0; }
.tabs .on { width: 71px; height: 24px; padding: 0 10px 1px; border: 0; border-left: 1px solid #a9a9a9; text-align: left; }
.head-tabs { height: 25px; border-right: 1px dotted #000; border-top: 1px dotted #000; }
.head-tabs button:not(.on), .tab-fill { border-bottom: 1px solid #a9a9a9; }
.tab-fill { flex: 1; height: 22px; }
.panel { flex: none; height: 182px; padding-top: 10px; border: solid #a9a9a9; border-width: 0 1px 1px; }
.fields { display: grid; grid-template-columns: 329fr 361fr 292fr; }
.col { display: grid; gap: 5px; }
.field { display: flex; gap: 8px; }
.field label { flex: none; width: 81px; padding-top: 4px; text-align: right; }
.field > select, .field > input, .lookup { width: 171px; }
.lookup { display: flex; height: 20px; background: #fff; border: 1px solid #a0a090; }
.lookup input { flex: 1; min-width: 0; height: 18px; border: 0; }
.lookup button {
  width: 18px;
  border-left: 1px solid #a9a9a9;
  background: #eceaec url("data:image/svg+xml,%3Csvg xmlns='http://www.w3.org/2000/svg' width='10' height='2'%3E%3Cpath d='M0 0h2v2H0zM4 0h2v2H4zM8 0h2v2H8z' fill='%23777'/%3E%3C/svg%3E") 2px 8px no-repeat;
}
.extra { display: flex; margin-top: 7px; }
.extra label { width: 235px; }
.extra .low label { width: 222px; }
.extra .field > input { width: 111px; }
.extra .low { margin-top: 4px; }
.splitter { display: flex; flex: none; justify-content: center; align-items: center; gap: 2px; height: 12px; }
.splitter i { width: 2px; height: 2px; background: #777; }
.detail-tabs .on { border: solid #a9a9a9; border-width: 1px 1px 0; }
.detail-tabs .on + button { border-left: 0; padding-left: 11px; }
.grid-frame { flex: 1; min-height: 0; border: solid #a9a9a9; border-width: 2px 2px 0; }
table { width: 100%; table-layout: fixed; border-collapse: separate; border-spacing: 0; }
th, td { height: 21px; padding: 0 0 0 3px; font-weight: 400; text-align: left; white-space: nowrap; border: solid #d4d4d4; border-width: 0 1px 1px 0; }
th { border-color: #a9a9a9; }
.mark { padding: 0 0 0 5px; border-right-color: #a9a9a9; border-bottom: 0; }
.mark svg { width: 9px; height: 9px; }
th:last-child, td:last-child { border-right: 0; }
.c19 { width: 19px; }
.c50 { width: 50px; }
.c60 { width: 60px; }
.c95 { width: 95px; }
.c100 { width: 100px; }
.c150 { width: 150px; }

.callout { position: absolute; left: 144px; top: 40px; width: 87px; height: 47px; border: 3px solid #ff3b3b; pointer-events: none; }
.arrow { position: absolute; left: 180px; top: 97px; width: 130px; height: 200px; pointer-events: none; }
```
